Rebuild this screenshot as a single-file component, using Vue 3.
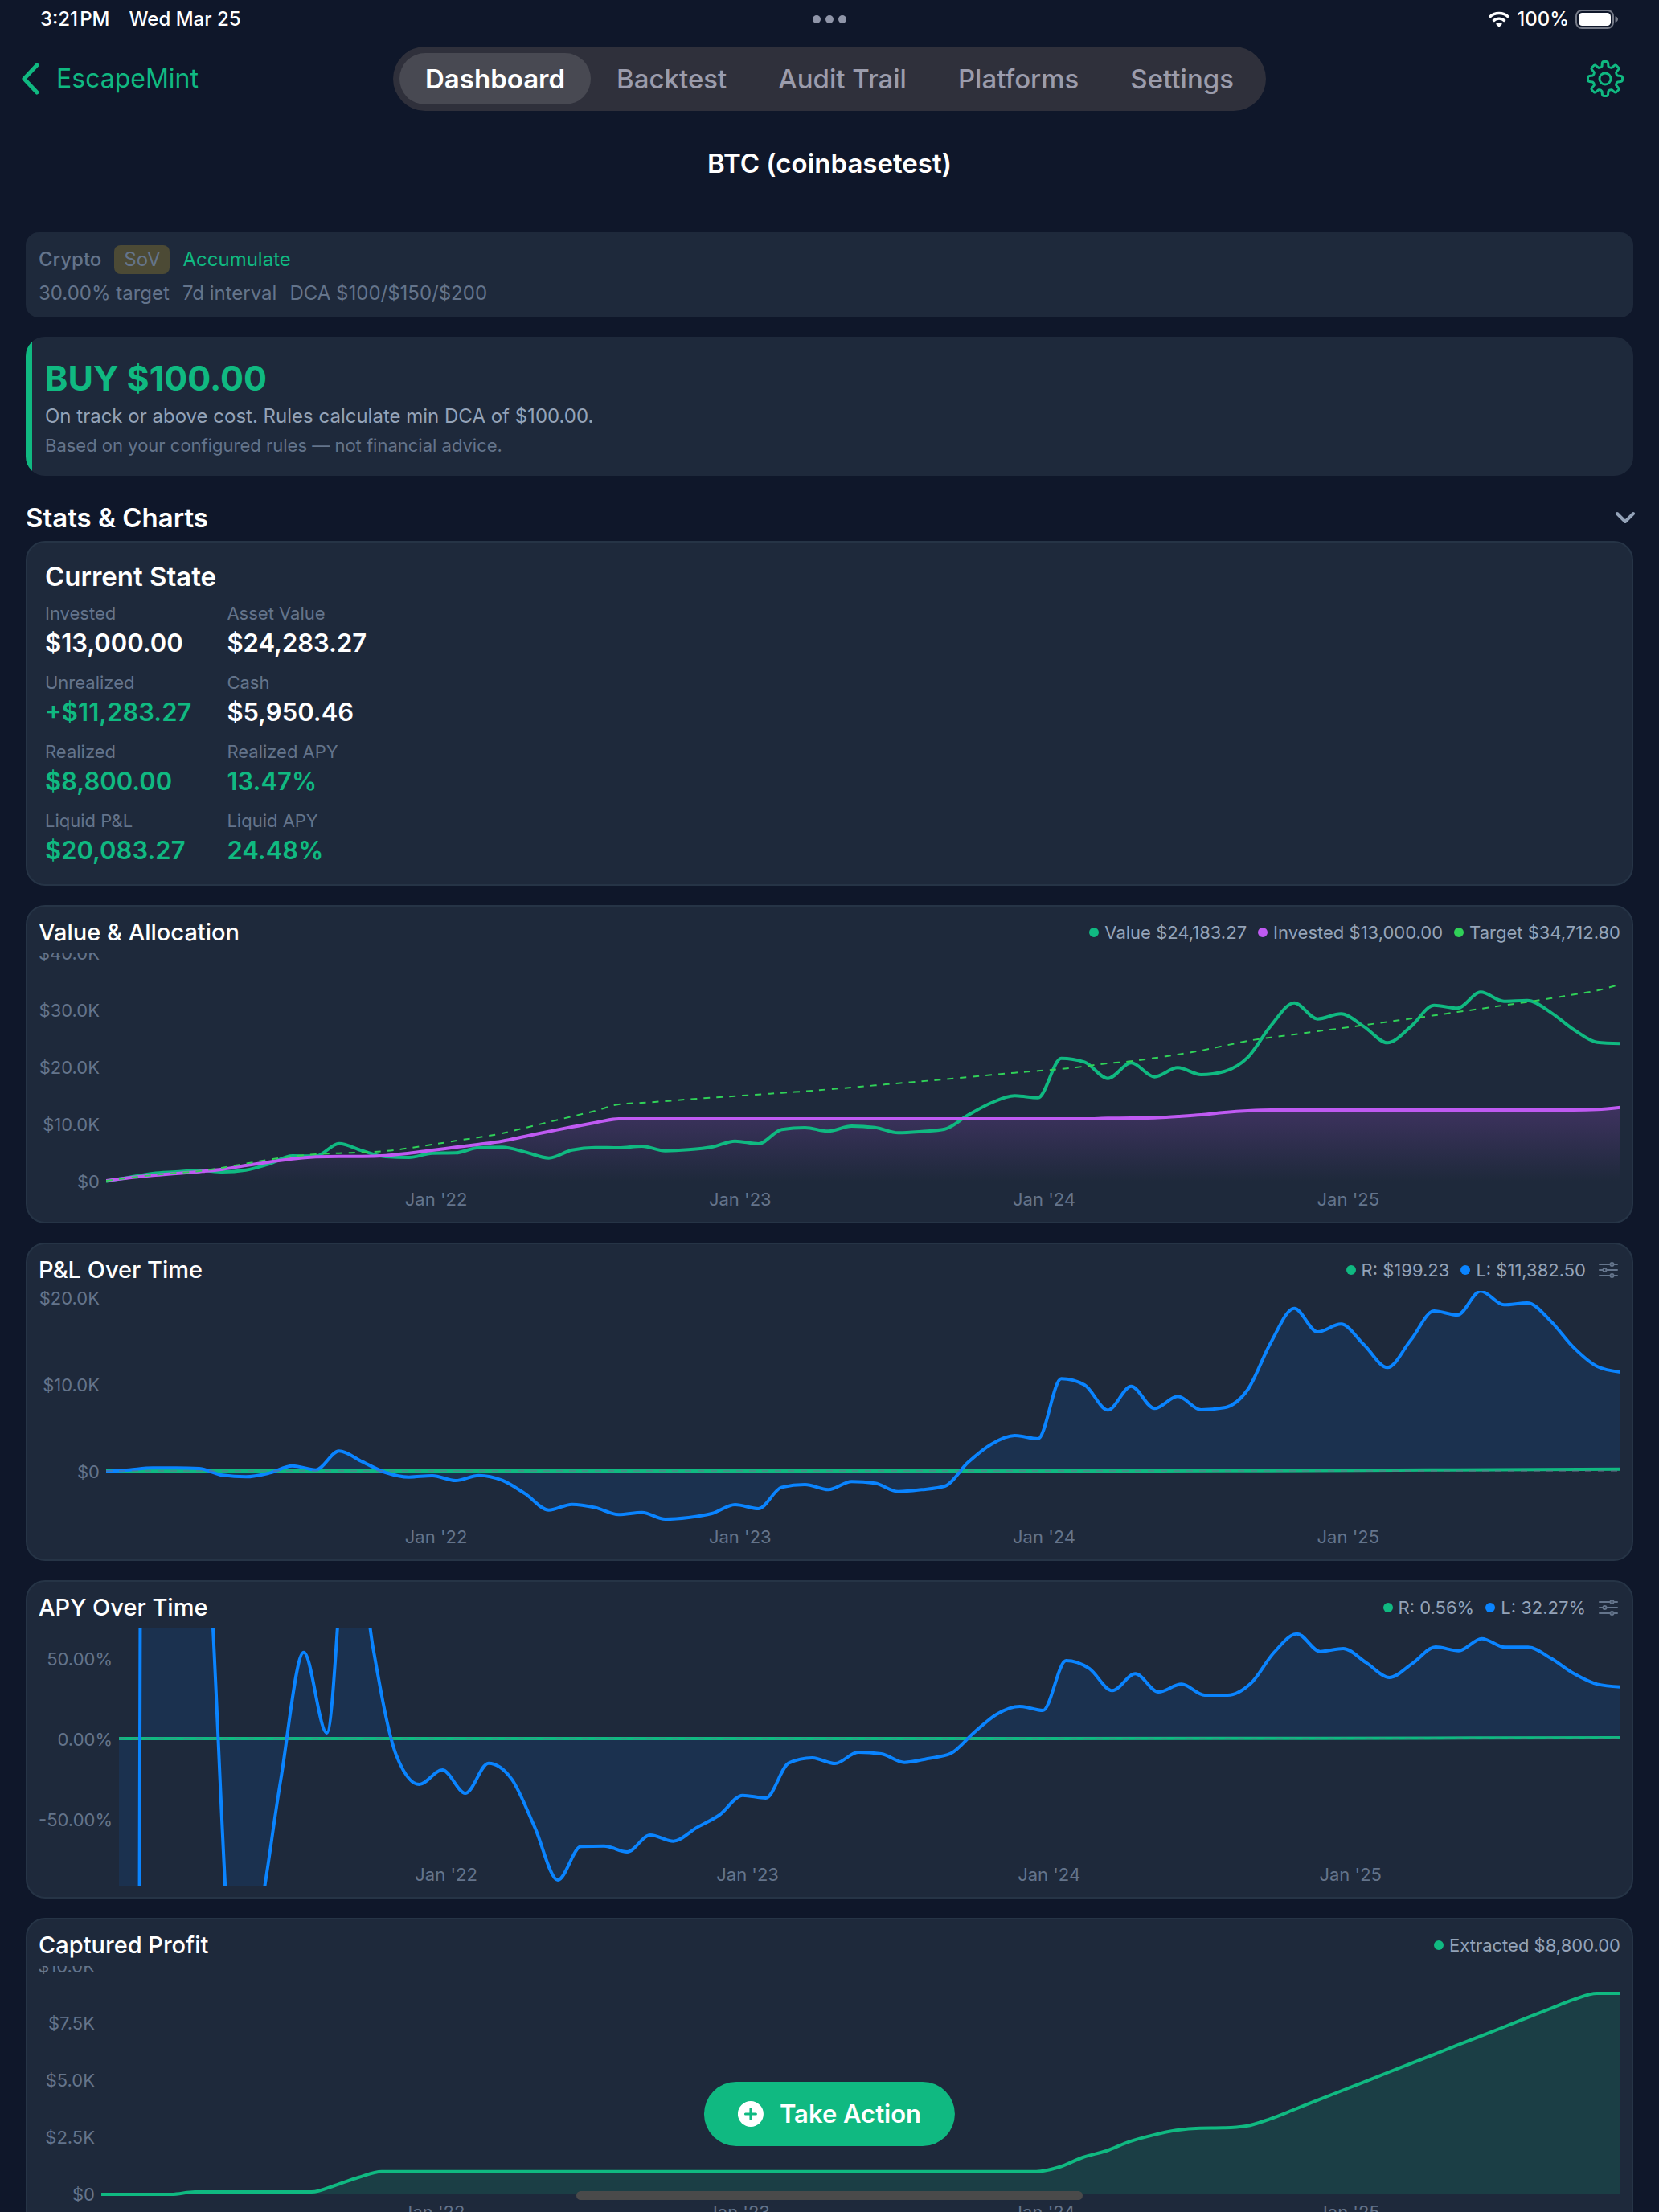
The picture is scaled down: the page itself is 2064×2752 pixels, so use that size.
<script setup>
const tabs = ['Dashboard', 'Backtest', 'Audit Trail', 'Platforms', 'Settings']

const stats = [
  { label: 'Invested', value: '$13,000.00' },
  { label: 'Asset Value', value: '$24,283.27' },
  { label: 'Unrealized', value: '+$11,283.27', gain: true },
  { label: 'Cash', value: '$5,950.46' },
  { label: 'Realized', value: '$8,800.00', gain: true },
  { label: 'Realized APY', value: '13.47%', gain: true },
  { label: 'Liquid P&L', value: '$20,083.27', gain: true },
  { label: 'Liquid APY', value: '24.48%', gain: true }
]

// Samples are four weeks apart; a year spans 13.05 samples.
const SAMPLES = 65
const YEAR = 13.05
const years = ["Jan '22", "Jan '23", "Jan '24", "Jan '25"]
const timeColumns = lead => `${lead}fr repeat(4, ${YEAR}fr) ${(SAMPLES - lead - 4 * YEAR).toFixed(2)}fr`

// Vertical plot range, in sample units measured downwards.
const TOP = 228
const RANGE = 960

// Monotone cubic interpolation through [x, y] points.
function smooth(points) {
  const n = points.length
  const slope = []
  for (let i = 0; i < n - 1; i++) {
    slope.push((points[i + 1][1] - points[i][1]) / (points[i + 1][0] - points[i][0]))
  }
  const tangent = points.map((p, i) => {
    if (i === 0 || i === n - 1) return 0
    const h0 = p[0] - points[i - 1][0]
    const h1 = points[i + 1][0] - p[0]
    const s0 = slope[i - 1]
    const s1 = slope[i]
    const mean = (s0 * h1 + s1 * h0) / (h0 + h1)
    return (Math.sign(s0) + Math.sign(s1)) * Math.min(Math.abs(s0), Math.abs(s1), Math.abs(mean) / 2)
  })
  tangent[0] = (3 * slope[0] - tangent[1]) / 2
  tangent[n - 1] = (3 * slope[n - 2] - tangent[n - 2]) / 2
  let d = `M${points[0][0]},${points[0][1]}`
  for (let i = 0; i < n - 1; i++) {
    const [x0, y0] = points[i]
    const [x1, y1] = points[i + 1]
    const h = (x1 - x0) / 3
    d += `C${(x0 + h).toFixed(3)},${(y0 + h * tangent[i]).toFixed(2)} ${(x1 - h).toFixed(3)},${(y1 - h * tangent[i + 1]).toFixed(2)} ${x1},${y1}`
  }
  return d
}

const series = values => smooth(values.map((v, i) => [i, v]))
const area = (line, base) => `${line}L${SAMPLES},${base}L0,${base}Z`

const value = series([
  1079, 1064, 1050, 1044, 1038, 1044, 1037, 1014, 984, 985, 938, 965, 987, 990, 974, 973, 953, 952, 970, 992, 962, 953,
  954, 948, 965, 961, 951, 929, 939, 886, 879, 892, 873, 878, 898, 893, 884, 832, 786, 760, 767, 620, 634, 695, 637, 689,
  655, 681, 669, 617, 498, 413, 473, 454, 502, 562, 502, 422, 433, 373, 407, 404, 448, 513, 560, 565
])
const invested = series([
  1077, 1066, 1057, 1050, 1043, 1034, 1020, 1007, 995, 988, 986, 986, 983, 974, 963, 952, 941, 929, 911, 893, 876, 860,
  846, ...Array(20).fill(846), 844, 843, 842, 837, 831, 822, 816, 813, ...Array(13).fill(813), 811, 803
])
const target = series([
  1077, 1066, 1056, 1048, 1041, 1028, 1013, 998, 986, 978, 974, 971, 966, 955, 942, 928, 915, 900, 879, 858, 837, 816,
  792, 786, 780, 773, 767, 761, 755, 749, 743, 736, 729, 721, 713, 706, 698, 690, 682, 674, 667, 660, 650, 639, 631, 619,
  606, 591, 573, 555, 542, 531, 519, 508, 496, 484, 472, 460, 447, 435, 422, 410, 396, 382, 367, 343
])
const liquid = series([
  903, 896, 889, 889, 891, 916, 922, 908, 881, 896, 826, 866, 906, 923, 918, 936, 917, 935, 986, 1046, 1025, 1037, 1063,
  1055, 1080, 1074, 1059, 1026, 1041, 961, 951, 970, 940, 946, 977, 970, 957, 868, 800, 768, 780, 556, 579, 673, 584,
  667, 622, 672, 664, 597, 420, 293, 381, 352, 430, 514, 412, 303, 318, 229, 280, 273, 340, 440, 510, 531
])
const liquidApy = series([
  120000, -900, -850, -1500, 110, 1560, 1340, 795, 317, 618, -275, 300, 700, 810, 756, 843, 731, 790, 970, 1167, 1042,
  1040, 1062, 999, 1022, 972, 924, 851, 861, 730, 711, 732, 690, 696, 728, 714, 695, 618, 548, 519, 534, 348, 377, 460,
  397, 465, 436, 477, 477, 433, 318, 248, 314, 303, 356, 411, 358, 297, 311, 266, 298, 298, 340, 397, 436, 446
])
const extracted = series([
  1080, 1080, 1080, 1080, 1071, 1071, 1071, 1071, 1071, 1071, 1047, 1017, 995, ...Array(28).fill(995), 978, 942, 918,
  883, 859, 841, 833, 832, 825, 799, 765, 730, 696, 662, 627, 593, 559, 524, 490, 456, 421, 387, 353, 330, 330
])
const realized = smooth([[0, 900], [40, 900], [50, 899], [58, 896], [65, 893]])
const realizedApy = smooth([[0, 639], [40, 639], [52, 638], [65, 636]])

const charts = [
  {
    title: 'Value & Allocation',
    legend: [['mint', 'Value $24,183.27'], ['purple', 'Invested $13,000.00'], ['lime', 'Target $34,712.80']],
    axis: 'axis-medium',
    ticks: ['$40.0K', '$30.0K', '$20.0K', '$10.0K', '$0'],
    first: 0,
    pitch: 71,
    lead: 7.64,
    fill: ['fill-purple', area(invested, 1079)],
    lines: [['line mint', value], ['line purple', invested], ['line-dashed lime', target]]
  },
  {
    title: 'P&L Over Time',
    legend: [['mint', 'R: $199.23'], ['blue', 'L: $11,382.50']],
    options: true,
    axis: 'axis-medium',
    ticks: ['$20.0K', '$10.0K', '$0'],
    first: 9,
    pitch: 108,
    lead: 7.64,
    fill: ['fill-blue', area(liquid, 900)],
    lines: [['line mint', realized], ['line blue', liquid], ['line-dashed zero', 'M0,900H65']]
  },
  {
    title: 'APY Over Time',
    legend: [['mint', 'R: 0.56%'], ['blue', 'L: 32.27%']],
    options: true,
    axis: 'axis-wide',
    ticks: ['50.00%', '0.00%', '-50.00%'],
    first: 38,
    pitch: 100,
    lead: 7.64,
    fill: ['fill-blue', area(liquidApy, 639)],
    lines: [['line mint', realizedApy], ['line blue', liquidApy], ['line-dashed zero', 'M0,639H65']]
  },
  {
    title: 'Captured Profit',
    legend: [['mint', 'Extracted $8,800.00']],
    axis: 'axis-narrow',
    ticks: ['$10.0K', '$7.5K', '$5.0K', '$2.5K', '$0'],
    first: 0,
    pitch: 71,
    lead: 7.7,
    fill: ['fill-mint', area(extracted, 1079)],
    lines: [['line mint', extracted]]
  }
]

// Outline of an eight-toothed gear on a 46 px box.
function gearPath() {
  const c = 23
  const at = (r, a) => `${(c + r * Math.sin(a)).toFixed(2)},${(c - r * Math.cos(a)).toFixed(2)}`
  let d = ''
  for (let i = 0; i < 8; i++) {
    const a = (i * Math.PI) / 4
    d += `${i ? 'L' : 'M'}${at(16, a - 0.25)}L${at(20, a - 0.18)}Q${at(21.6, a - 0.16)} ${at(21.6, a - 0.08)}L${at(21.6, a + 0.08)}Q${at(21.6, a + 0.16)} ${at(20, a + 0.18)}L${at(16, a + 0.25)}Q${at(14.4, a + Math.PI / 8)} ${at(16, a + Math.PI / 4 - 0.25)}`
  }
  return d + 'Z'
}
const gear = gearPath()
</script>

<template>
  <div class="screen">
    <div class="status">
      <div class="status-side"><span>3:21&#8202;PM</span><span>Wed Mar 25</span></div>
      <div class="dots"><i></i><i></i><i></i></div>
      <div class="status-side status-right">
        <svg class="wifi" viewBox="0 0 28 20" aria-hidden="true">
          <path d="M2 7.5a17 17 0 0 1 24 0M6.6 12.2a10.500 10.500 0 0 1 14.800 0" fill="none" stroke="#fff" stroke-width="3.400" />
          <path d="M14 20l-4-4.300a5.800 5.800 0 0 1 8 0z" fill="#fff" />
        </svg>
        <span>100%</span>
        <svg class="battery" viewBox="0 0 54 24" aria-hidden="true">
          <rect x="1" y="1" width="46" height="22" rx="7" fill="none" stroke="#767b88" stroke-width="2" />
          <rect x="4" y="4" width="40" height="16" rx="4.500" fill="#fff" />
          <path d="M49.500 8.200c2.300.6 3.500 2 3.500 3.800s-1.200 3.200-3.500 3.800z" fill="#767b88" />
        </svg>
      </div>
    </div>

    <header class="nav">
      <a class="back" href="#">
        <svg viewBox="0 0 24 40" aria-hidden="true"><path d="M20 3L4 20l16 17" fill="none" stroke="currentColor" stroke-width="5" stroke-linecap="round" stroke-linejoin="round" /></svg>
        <span>EscapeMint</span>
      </a>
      <nav class="tabs">
        <button v-for="(tab, i) in tabs" :key="tab" type="button" class="tab" :class="{ active: i === 0 }">{{ tab }}</button>
      </nav>
      <button type="button" class="gear" aria-label="Fund settings">
        <svg viewBox="0 0 46 46" fill="none" stroke="currentColor" stroke-width="3" stroke-linejoin="round" aria-hidden="true">
          <path :d="gear" />
          <circle cx="23" cy="23" r="7" />
        </svg>
      </button>
    </header>

    <h1>BTC (coinbasetest)</h1>

    <main>
      <section class="summary">
        <div class="row"><span class="kind">Crypto</span><span class="badge">SoV</span><span class="mode">Accumulate</span></div>
        <div class="row"><span>30.00% target</span><span>7d interval</span><span>DCA $100/$150/$200</span></div>
      </section>

      <section class="advice">
        <h2>BUY $100.00</h2>
        <p>On track or above cost. Rules calculate min DCA of $100.00.</p>
        <small>Based on your configured rules — not financial advice.</small>
      </section>

      <button type="button" class="disclosure">
        <span>Stats &amp; Charts</span>
        <svg viewBox="0 0 26 16" aria-hidden="true"><path d="M3 3l10 10L23 3" fill="none" stroke="currentColor" stroke-width="4" stroke-linecap="round" stroke-linejoin="round" /></svg>
      </button>

      <section class="card state">
        <h3>Current State</h3>
        <dl>
          <div v-for="s in stats" :key="s.label">
            <dt>{{ s.label }}</dt>
            <dd :class="{ gain: s.gain }">{{ s.value }}</dd>
          </div>
        </dl>
      </section>

      <section v-for="c in charts" :key="c.title" class="card chart">
        <div class="chart-head">
          <h4>{{ c.title }}</h4>
          <ul class="legend">
            <li v-for="[color, text] in c.legend" :key="text"><i :class="color"></i>{{ text }}</li>
          </ul>
          <button v-if="c.options" type="button" class="options" aria-label="Chart options">
            <svg viewBox="0 0 24 20" fill="none" stroke="currentColor" stroke-width="2" stroke-linecap="round" aria-hidden="true">
              <path d="M1 3h13M19 3h4M1 10h4M10 10h13M1 17h13M19 17h4" />
              <circle cx="16.500" cy="3" r="2" /><circle cx="7.500" cy="10" r="2" /><circle cx="16.500" cy="17" r="2" />
            </svg>
          </button>
        </div>
        <div class="plot">
          <div class="y-axis" :class="c.axis">
            <ul :style="{ marginTop: c.first - c.pitch / 2 + 'px' }">
              <li v-for="t in c.ticks" :key="t" :style="{ height: c.pitch + 'px' }">{{ t }}</li>
            </ul>
          </div>
          <div class="canvas">
            <svg :viewBox="`0 ${TOP} ${SAMPLES} ${RANGE}`" preserveAspectRatio="none" aria-hidden="true">
              <defs>
                <linearGradient id="fade" x1="0" y1="0" x2="0" y2="1">
                  <stop offset="0" stop-color="#bf5af2" stop-opacity="0.200" />
                  <stop offset="1" stop-color="#bf5af2" stop-opacity="0" />
                </linearGradient>
              </defs>
              <path :class="c.fill[0]" :d="c.fill[1]" />
              <path v-for="([name, d]) in c.lines" :key="name" :class="name" :d="d" vector-effect="non-scaling-stroke" />
            </svg>
            <div class="x-axis" :style="{ gridTemplateColumns: timeColumns(c.lead) }">
              <span v-for="y in years" :key="y">{{ y }}</span>
            </div>
          </div>
        </div>
      </section>
    </main>

    <button type="button" class="action">
      <svg viewBox="0 0 32 32" aria-hidden="true">
        <circle cx="16" cy="16" r="16" fill="#fff" />
        <path d="M16 9.500v13M9.500 16h13" stroke="#10b981" stroke-width="3" stroke-linecap="round" />
      </svg>
      <span>Take Action</span>
    </button>
    <div class="home-bar"></div>
  </div>
</template>

<style>
body {
  margin: 0;
  background: #0f172a;
}
</style>

<style scoped>
.screen {
  position: relative;
  box-sizing: border-box;
  height: 100vh;
  overflow: hidden;
  background: #0f172a;
  color: #fff;
  font-family: Inter, "Liberation Sans", sans-serif;
  font-size: 22px;
  line-height: 28px;
}
h1, h2, h3, h4, p, ul, dl, dd {
  margin: 0;
  padding: 0;
}
ul {
  list-style: none;
}
button {
  padding: 0;
  border: 0;
  background: none;
  color: inherit;
  font: inherit;
}
svg {
  display: block;
}

.status {
  display: grid;
  grid-template-columns: 1fr auto 1fr;
  align-items: center;
  height: 48px;
  padding: 0 50px;
  font-size: 24px;
  font-weight: 500;
}
.status-side {
  display: flex;
  align-items: center;
  gap: 24px;
}
.status-right {
  justify-content: flex-end;
  gap: 8px;
}
.dots {
  display: flex;
  gap: 6px;
}
.dots i {
  width: 10px;
  height: 10px;
  border-radius: 50%;
  background: #8f95a8;
}
.wifi {
  width: 28px;
  height: 20px;
}
.battery {
  width: 54px;
  height: 24px;
}

.nav {
  display: grid;
  grid-template-columns: 1fr auto 1fr;
  align-items: center;
  height: 80px;
  margin-top: 10px;
  padding: 0 26px;
  font-size: 32px;
  line-height: 40px;
}
.back {
  display: flex;
  align-items: center;
  gap: 20px;
  color: #10b981;
  text-decoration: none;
}
.back svg {
  width: 24px;
  height: 40px;
}
.tabs {
  display: flex;
  padding: 8px;
  border-radius: 40px;
  background: #2f303b;
}
.tab {
  padding: 12px 32px;
  border-radius: 32px;
  color: #9b9cac;
  font-size: 33px;
  font-weight: 500;
}
.tab.active {
  background: #484952;
  color: #fff;
  font-weight: 600;
}
.gear {
  justify-self: end;
  margin-right: 18px;
  color: #10b981;
}
.gear svg {
  width: 46px;
  height: 46px;
}

h1 {
  margin: 45px 0 66px;
  font-size: 33px;
  font-weight: 600;
  line-height: 40px;
  text-align: center;
}

main {
  display: flex;
  flex-direction: column;
  padding: 0 32px;
}
.summary {
  display: flex;
  flex-direction: column;
  gap: 10px;
  padding: 16px;
  border-radius: 16px;
  background: #1e293b;
  color: #64748b;
  font-size: 24px;
}
.summary .row {
  display: flex;
  align-items: center;
  gap: 16px;
}
.kind {
  font-weight: 500;
}
.badge {
  padding: 4px 12px;
  border-radius: 8px;
  background: #4c4a35;
}
.mode {
  color: #10b981;
}

.advice {
  display: flex;
  flex-direction: column;
  gap: 8px;
  margin-top: 24px;
  padding: 25px 24px 24px;
  border-radius: 24px;
  background: linear-gradient(to right, #10b981 8px, #1e293b 8px);
}
.advice h2 {
  color: #10b981;
  font-size: 43px;
  font-weight: 700;
  line-height: 52px;
}
.advice p {
  color: #94a3b8;
  font-size: 24px;
}
.advice small {
  color: #64748b;
  font-size: 22px;
}

.disclosure {
  display: flex;
  align-items: center;
  justify-content: space-between;
  margin: 32px 0 9px;
  font-size: 33px;
  font-weight: 600;
  line-height: 40px;
}
.disclosure svg {
  width: 26px;
  height: 16px;
  margin-right: -3px;
  color: #94a3b8;
}

.card {
  box-sizing: border-box;
  border: 2px solid #263446;
  border-radius: 24px;
  background: #1e293b;
}
.state {
  padding: 22px 22px 23px;
}
.state h3 {
  font-size: 33px;
  font-weight: 600;
  line-height: 40px;
}
.state dl {
  display: grid;
  grid-template-columns: max-content max-content;
  column-gap: 44px;
  row-gap: 16px;
  margin-top: 12px;
}
.state dt {
  color: #64748b;
}
.state dd {
  margin-top: 4px;
  font-size: 31px;
  font-weight: 600;
  line-height: 38px;
}
.state dd.gain {
  color: #10b981;
}

.chart {
  margin-top: 24px;
  padding: 14px;
}
.chart-head {
  display: flex;
  align-items: center;
  height: 36px;
  margin-bottom: 8px;
}
.chart h4 {
  flex: 1;
  font-size: 29px;
  font-weight: 500;
}
.legend {
  display: flex;
  gap: 14px;
  color: #94a3b8;
}
.legend li {
  display: flex;
  align-items: center;
  gap: 7px;
}
.legend i {
  width: 12px;
  height: 12px;
  border-radius: 50%;
  background: currentColor;
}
.options {
  margin: 0 3px 0 16px;
  color: #64748b;
}
.options svg {
  width: 24px;
  height: 20px;
}
.mint {
  color: #10b981;
}
.purple {
  color: #bf5af2;
}
.lime {
  color: #30d158;
}
.blue {
  color: #0a84ff;
}

.plot {
  display: flex;
  height: 320px;
  color: #64748b;
}
.y-axis {
  box-sizing: border-box;
  overflow: hidden;
  padding-right: 8px;
  white-space: nowrap;
}
.axis-narrow {
  width: 78px;
}
.axis-medium {
  width: 84px;
}
.axis-wide {
  width: 100px;
}
.y-axis li {
  display: flex;
  align-items: center;
  justify-content: flex-end;
}
.canvas {
  display: grid;
  flex: 1;
  min-width: 0;
}
.canvas svg {
  grid-area: 1 / 1;
  width: 100%;
  height: 320px;
}
.x-axis {
  display: grid;
  grid-area: 1 / 1;
  align-self: end;
  text-align: center;
}
.x-axis span:first-child {
  grid-column: 2;
}
.line {
  fill: none;
  stroke: currentColor;
  stroke-width: 4px;
}
.line-dashed {
  fill: none;
  stroke: currentColor;
  stroke-width: 2px;
  stroke-dasharray: 8 8;
}
.zero {
  color: #64748b;
  opacity: 0.5;
}
.fill-purple {
  fill: url(#fade);
}
.fill-blue {
  fill: #0a84ff;
  fill-opacity: 0.1;
}
.fill-mint {
  fill: #10b981;
  fill-opacity: 0.15;
}

.action {
  position: absolute;
  bottom: 82px;
  left: 50%;
  display: flex;
  align-items: center;
  gap: 20px;
  height: 80px;
  padding: 0 42px;
  border-radius: 40px;
  background: #10b981;
  font-size: 31px;
  font-weight: 600;
  line-height: 40px;
  white-space: nowrap;
  transform: translateX(-50%);
}
.action svg {
  width: 32px;
  height: 32px;
}
.home-bar {
  position: absolute;
  bottom: 15px;
  left: 50%;
  width: 630px;
  height: 11px;
  border-radius: 6px;
  background: #4a4a4a;
  transform: translateX(-50%);
}
</style>
